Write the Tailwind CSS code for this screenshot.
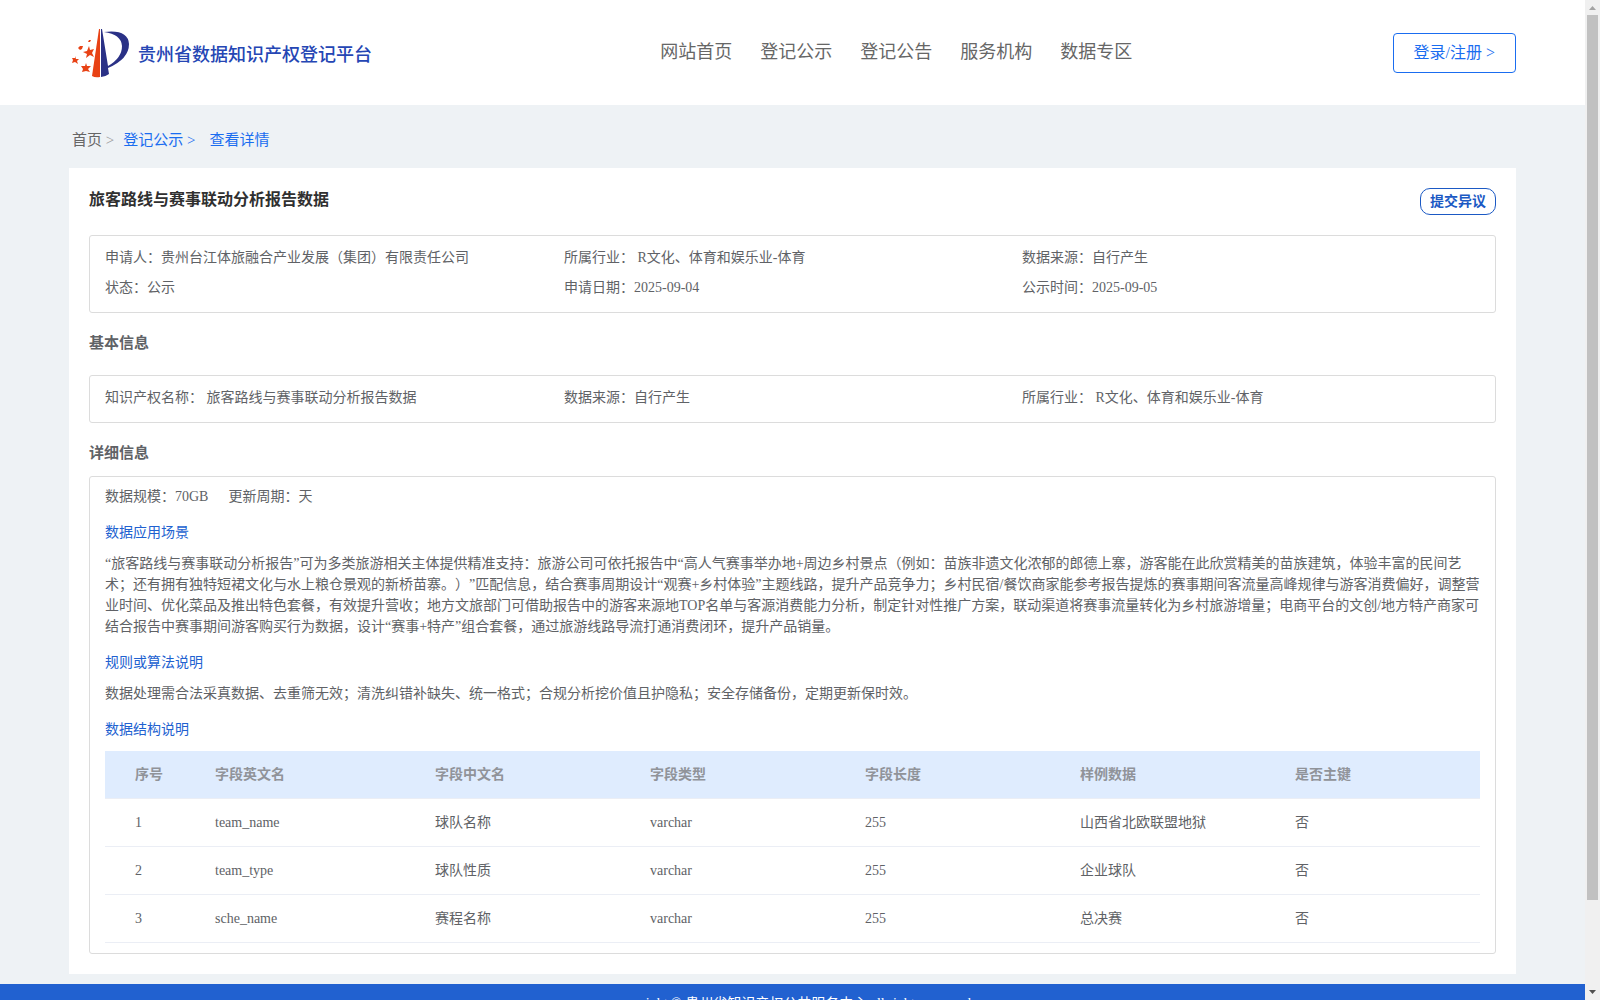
<!DOCTYPE html>
<html lang="zh-CN">

<head>
    <meta charset="UTF-8">
    <meta name="viewport" content="width=device-width, initial-scale=1.0">
    <title>贵州省数据知识产权登记平台</title>
    <script src="https://cdn.jsdelivr.net/npm/@tailwindcss/browser@4"></script>
</head>

<body class="flex h-screen overflow-hidden bg-[#eef2f5] font-['Liberation_Serif','Noto_Sans_CJK_SC',serif] text-sm text-[#606266] [text-spacing-trim:space-all]">
    <div class="flex-1 min-w-0 overflow-hidden">
        <header class="bg-white px-[69px] h-[105px] flex items-center justify-between">
            <a href="#" class="flex items-center gap-2 pl-[3px] pr-7">
                <svg class="w-[58px] h-[50px]" viewBox="0 0 58 50">
                    <path d="M27 1 L28 1 L28 49 Q23 50 20 48 Z" fill="#e84215" />
                    <path d="M29 1 L30 1 L36 38 Q50 30 50 18 Q49 6 32 4 Q56 1 57 16 Q57 31 36 40 L37 46 Q33 49 29 49 Z" fill="#2a3186" />
                    <g fill="#e84215">
                        <path d="M17 18 L18 22 L22 21 L20 25 L22 29 L18 27 L14 30 L15 26 L11 24 L15 23 Z" />
                        <path d="M3 28 L4 31 L7 31 L5 33 L6 36 L3 34 L0 35 L1 32 L0 30 L3 30 Z" />
                        <path d="M14 35 L15 38 L19 38 L16 41 L18 44 L14 43 L10 44 L11 41 L9 38 L13 38 Z" />
                        <path d="M8 18 L11 18 L10 21 L8 22 L6 20 Z" />
                        <path d="M17 12 L19 12 L18 14 L16 14 Z" />
                    </g>
                </svg>
                <span class="pt-1 text-lg font-medium text-[#2546b4]">贵州省数据知识产权登记平台</span>
            </a>
            <nav class="flex gap-7 pb-[2px] text-lg text-[#666]">
                <a href="#">网站首页</a>
                <a href="#">登记公示</a>
                <a href="#">登记公告</a>
                <a href="#">服务机构</a>
                <a href="#">数据专区</a>
            </nav>
            <button class="h-10 px-5 border border-[#1a6df0] rounded text-base text-[#1a6df0]">登录/注册 &gt;</button>
        </header>

        <main class="mx-[69px]">
            <nav class="flex h-[63px] items-center gap-[9px] pl-[3px] pt-2 text-[15px]">
                <a href="#" class="text-[#666]">首页 <span class="text-[#999]">&gt;</span></a>
                <a href="#" class="text-[#1a6df0]">登记公示 &gt;</a>
                <a href="#" class="ml-[5px] text-[#1a6df0]">查看详情</a>
            </nav>

            <div class="bg-white p-5">
                <div class="flex h-[47px] items-start justify-between">
                    <h1 class="text-base leading-6 font-bold text-[#303030]">旅客路线与赛事联动分析报告数据</h1>
                    <button class="h-[27px] px-[9px] border border-[#1b59c4] rounded-[10px] text-sm leading-6 font-bold text-[#1b59c4]">提交异议</button>
                </div>

                <div class="grid grid-cols-[459px_458px_1fr] rounded-[3px] border border-[#dcdcdc] px-[15px] pt-[7px] pb-[9px] leading-[30px]">
                    <p>申请人：贵州台江体旅融合产业发展（集团）有限责任公司</p>
                    <p>所属行业： R文化、体育和娱乐业-体育</p>
                    <p>数据来源：自行产生</p>
                    <p>状态：公示</p>
                    <p>申请日期：2025-09-04</p>
                    <p>公示时间：2025-09-05</p>
                </div>

                <h2 class="h-[62px] text-[15px] leading-[60px] font-bold">基本信息</h2>
                <div class="grid grid-cols-[459px_458px_1fr] rounded-[3px] border border-[#dcdcdc] px-[15px] pt-[7px] pb-[9px] leading-[30px]">
                    <p>知识产权名称： 旅客路线与赛事联动分析报告数据</p>
                    <p>数据来源：自行产生</p>
                    <p>所属行业： R文化、体育和娱乐业-体育</p>
                </div>

                <h2 class="h-[53px] text-[15px] leading-[60px] font-bold">详细信息</h2>
                <div class="rounded-[3px] border border-[#dcdcdc] px-[15px] pt-[5px] pb-[10px]">
                    <div class="flex gap-5 leading-[30px]">
                        <p>数据规模：70GB</p>
                        <p>更新周期：天</p>
                    </div>
                    <h3 class="mt-[6px] leading-[30px] text-[#2161d0]">数据应用场景</h3>
                    <p class="mt-[5px] leading-[21px]">“旅客路线与赛事联动分析报告”可为多类旅游相关主体提供精准支持：旅游公司可依托报告中“高人气赛事举办地+周边乡村景点（例如：苗族非遗文化浓郁的郎德上寨，游客能在此欣赏精美的苗族建筑，体验丰富的民间艺术；还有拥有独特短裙文化与水上粮仓景观的新桥苗寨。）”匹配信息，结合赛事周期设计“观赛+乡村体验”主题线路，提升产品竞争力；乡村民宿/餐饮商家能参考报告提炼的赛事期间客流量高峰规律与游客消费偏好，调整营业时间、优化菜品及推出特色套餐，有效提升营收；地方文旅部门可借助报告中的游客来源地TOP名单与客源消费能力分析，制定针对性推广方案，联动渠道将赛事流量转化为乡村旅游增量；电商平台的文创/地方特产商家可结合报告中赛事期间游客购买行为数据，设计“赛事+特产”组合套餐，通过旅游线路导流打通消费闭环，提升产品销量。</p>
                    <h3 class="mt-[11px] leading-[30px] text-[#2161d0]">规则或算法说明</h3>
                    <p class="mt-[5px] leading-[21px]">数据处理需合法采真数据、去重筛无效；清洗纠错补缺失、统一格式；合规分析挖价值且护隐私；安全存储备份，定期更新保时效。</p>
                    <h3 class="mt-[11px] leading-[30px] text-[#2161d0]">数据结构说明</h3>

                    <table class="mt-[6px] w-full table-fixed text-left leading-[23px]">
                        <colgroup>
                            <col class="w-[100px]">
                            <col class="w-[220px]">
                            <col class="w-[215px]">
                            <col class="w-[215px]">
                            <col class="w-[215px]">
                            <col class="w-[215px]">
                            <col>
                        </colgroup>
                        <thead class="bg-[#dfecfe] text-[#909399]">
                            <tr class="h-[47px] border-b border-[#ebeef5]">
                                <th class="pl-[30px]">序号</th>
                                <th class="px-[10px]">字段英文名</th>
                                <th class="px-[10px]">字段中文名</th>
                                <th class="px-[10px]">字段类型</th>
                                <th class="px-[10px]">字段长度</th>
                                <th class="px-[10px]">样例数据</th>
                                <th class="px-[10px]">是否主键</th>
                            </tr>
                        </thead>
                        <tbody>
                            <tr class="h-12 border-b border-[#ebeef5]">
                                <td class="pl-[30px]">1</td>
                                <td class="px-[10px]">team_name</td>
                                <td class="px-[10px]">球队名称</td>
                                <td class="px-[10px]">varchar</td>
                                <td class="px-[10px]">255</td>
                                <td class="px-[10px]">山西省北欧联盟地狱</td>
                                <td class="px-[10px]">否</td>
                            </tr>
                            <tr class="h-12 border-b border-[#ebeef5]">
                                <td class="pl-[30px]">2</td>
                                <td class="px-[10px]">team_type</td>
                                <td class="px-[10px]">球队性质</td>
                                <td class="px-[10px]">varchar</td>
                                <td class="px-[10px]">255</td>
                                <td class="px-[10px]">企业球队</td>
                                <td class="px-[10px]">否</td>
                            </tr>
                            <tr class="h-12 border-b border-[#ebeef5]">
                                <td class="pl-[30px]">3</td>
                                <td class="px-[10px]">sche_name</td>
                                <td class="px-[10px]">赛程名称</td>
                                <td class="px-[10px]">varchar</td>
                                <td class="px-[10px]">255</td>
                                <td class="px-[10px]">总决赛</td>
                                <td class="px-[10px]">否</td>
                            </tr>
                        </tbody>
                    </table>
                </div>
            </div>
        </main>

        <footer class="mt-[10px] bg-[#2161d0] pt-2 pb-6 text-center text-sm leading-6 text-white">
            <p>copyright © 贵州省知识产权公共服务中心 all rights reserved</p>
        </footer>
    </div>

    <!-- scrollbar -->
    <div class="flex w-[15px] flex-col items-center justify-between bg-[#f0f0f0] text-[#505050]">
        <svg class="h-[15px] w-[15px]" viewBox="0 0 15 15" fill="#a3a3a3">
            <path d="M4 10 L7.500 6 L11 10 Z" />
        </svg>
        <div class="w-[11px] flex-1 bg-[#c1c1c1]"></div>
        <div class="h-[85px]"></div>
        <svg class="h-[15px] w-[15px]" viewBox="0 0 15 15" fill="currentColor">
            <path d="M4 5 L11 5 L7.500 9 Z" />
        </svg>
    </div>
</body>

</html>
